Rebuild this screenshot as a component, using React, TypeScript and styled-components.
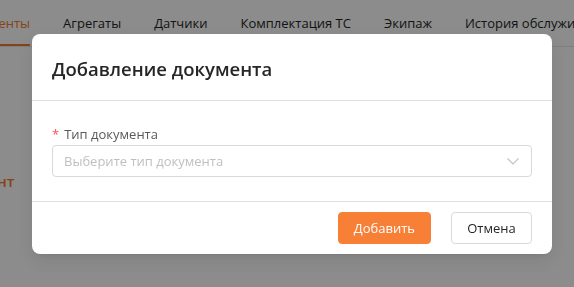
import styled, { createGlobalStyle } from "styled-components";

const GlobalStyle = createGlobalStyle`
  body {
    margin: 0;
    font-family: "Open Sans", "Noto Sans", sans-serif;
    background: #ffffff;
    overflow: hidden;
  }
`;

const Page = styled.div`
  width: 574px;
  height: 287px;
  overflow: hidden;
  position: relative;
  background: #ffffff;
`;

const TabBar = styled.div`
  display: flex;
  gap: 33px;
  height: 46px;
  margin-left: -41px;
  border-bottom: 1px solid #e8e8e8;
  white-space: nowrap;
`;

const Tab = styled.div<{ $active?: boolean }>`
  display: flex;
  align-items: center;
  font-size: 13px;
  color: ${(p) => (p.$active ? "#f47b30" : "#262626")};
  border-bottom: 2px solid ${(p) => (p.$active ? "#f47b30" : "transparent")};
  padding-top: 2px;
`;

const Content = styled.div`
  margin-left: -60px;
`;

const SectionTitle = styled.div`
  margin-top: 124px;
  font-size: 15px;
  font-weight: 600;
  color: #f47b30;
`;

const Overlay = styled.div`
  position: fixed;
  inset: 0;
  background: rgba(0, 0, 0, 0.45);
`;

const Modal = styled.div`
  position: absolute;
  top: 34px;
  left: 32px;
  width: 520px;
  background: #ffffff;
  border-radius: 8px;
  box-shadow: 0 6px 16px rgba(0, 0, 0, 0.08), 0 3px 6px -4px rgba(0, 0, 0, 0.12);
`;

const ModalHeader = styled.div`
  padding: 22px 20px 0;
  height: 67px;
  box-sizing: border-box;
  border-bottom: 1px solid #e0e0e0;
  font-size: 18.5px;
  font-weight: 600;
  color: #262626;
`;

const ModalBody = styled.div`
  padding: 22px 20px 24px;
  border-bottom: 1px solid #e0e0e0;
`;

const Label = styled.label`
  display: flex;
  gap: 5px;
  align-items: center;
  height: 22px;
  font-size: 13px;
  color: #595959;
`;

const Required = styled.span`
  color: #ff4d4f;
  font-size: 13px;
`;

const Select = styled.div`
  display: flex;
  align-items: center;
  justify-content: space-between;
  height: 32px;
  box-sizing: border-box;
  padding: 0 11px;
  border: 1px solid #d9d9d9;
  border-radius: 4px;
  font-size: 13px;
  color: #bfbfbf;
`;

const ModalFooter = styled.div`
  display: flex;
  justify-content: flex-end;
  gap: 20px;
  padding: 10px 20px;
`;

const Button = styled.button<{ $primary?: boolean }>`
  height: 32px;
  padding: 0 15px;
  border-radius: 4px;
  font-family: inherit;
  font-size: 13px;
  cursor: pointer;
  border: 1px solid ${(p) => (p.$primary ? "#f77f36" : "#d9d9d9")};
  background: ${(p) => (p.$primary ? "#f77f36" : "#ffffff")};
  color: ${(p) => (p.$primary ? "#ffffff" : "#262626")};
  min-width: ${(p) => (p.$primary ? "93px" : "81px")};
`;

const tabs = ["Документы", "Агрегаты", "Датчики", "Комплектация ТС", "Экипаж", "История обслуживания"];

export default function App() {
  return (
    <Page>
      <GlobalStyle />
      <TabBar>
        {tabs.map((t, i) => (
          <Tab key={t} $active={i === 0}>
            {t}
          </Tab>
        ))}
      </TabBar>
      <Content>
        <SectionTitle>Документ</SectionTitle>
      </Content>
      <Overlay />
      <Modal>
        <ModalHeader>Добавление документа</ModalHeader>
        <ModalBody>
          <Label>
            <Required>*</Required>
            Тип документа
          </Label>
          <Select>
            Выберите тип документа
            <svg width="14" height="14" viewBox="0 0 14 14" fill="none">
              <path d="M1.5 4.5 L7 10 L12.5 4.5" stroke="#bfbfbf" strokeWidth="1.1" />
            </svg>
          </Select>
        </ModalBody>
        <ModalFooter>
          <Button $primary>Добавить</Button>
          <Button>Отмена</Button>
        </ModalFooter>
      </Modal>
    </Page>
  );
}
